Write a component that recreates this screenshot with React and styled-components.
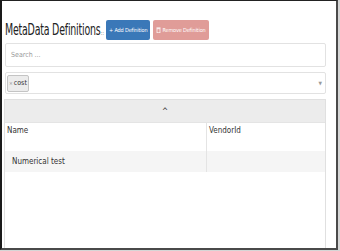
import React from 'react';
import styled, { createGlobalStyle } from 'styled-components';

const GlobalStyle = createGlobalStyle`
  html, body {
    margin: 0;
    padding: 0;
    background: #d6d6d6;
  }
  body {
    font-family: 'DejaVu Sans Condensed', 'Liberation Sans', sans-serif;
  }
`;

const Frame = styled.div`
  box-sizing: border-box;
  width: 338px;
  height: 250px;
  background: white;
  border: 2px solid #4a4a4a;
  border-left-color: #1a1a1a;
  border-top: 1px solid #222;
  overflow: hidden;
  display: flex;
  flex-direction: column;
  padding: 19px 10px 0 0;
`;

const TitleRow = styled.div`
  display: flex;
  align-items: center;
  height: 20px;
  padding-left: 3px;
`;

// the source font is a tall condensed face; squeeze the title to match
const Title = styled.h1`
  margin: 0 -42px 0 0;
  font-weight: normal;
  font-size: 15px;
  letter-spacing: -0.3px;
  color: #222;
  line-height: 20px;
  white-space: nowrap;
  transform: scaleX(0.7);
  transform-origin: left center;
`;

const Handle = styled.span`
  font-size: 6px;
  color: #777;
  margin: 6px 2px 0 1px;
  line-height: 1;
`;

const Button = styled.button`
  height: 20px;
  border: none;
  border-radius: 2px;
  padding: 0 3px;
  margin-right: 3px;
  font-family: inherit;
  font-size: 5.5px;
  letter-spacing: -0.15px;
  color: white;
  background: ${p => (p.danger ? '#e09c98' : '#3a78b8')};
  display: flex;
  align-items: center;
  gap: 1px;
`;

const Input = styled.div`
  box-sizing: border-box;
  margin: 3px 0 0 3px;
  height: 24px;
  border: 1px solid #e2e2e2;
  border-radius: 2px;
  display: flex;
  align-items: center;
  padding-left: 5px;
  font-size: 7px;
  color: #999;
`;

const Select = styled(Input)`
  margin-top: 5px;
  height: 22px;
  padding: 0 3px 0 1px;
  justify-content: space-between;
`;

const Tag = styled.span`
  height: 17px;
  border: 1px solid #c4c4c4;
  border-radius: 2px;
  background: #ececec;
  color: #333;
  font-size: 7px;
  display: flex;
  align-items: center;
  padding: 0 1px;
  box-sizing: border-box;
`;

const Cross = styled.span`
  color: #888;
  font-size: 5px;
  margin-right: 1px;
`;

const Caret = styled.span`
  font-size: 5px;
  color: #999;
`;

const Panel = styled.div`
  flex: 1;
  margin: 5px 0 0 2px;
  border: 1px solid #e0e0e0;
  border-bottom: none;
`;

const PanelHead = styled.div`
  height: 22px;
  background: #ececec;
  display: flex;
  align-items: center;
  justify-content: center;
  font-size: 8px;
  color: #333;
  border-bottom: 1px solid #e4e4e4;
`;

const Row = styled.div`
  display: grid;
  grid-template-columns: 201px 1fr;
  height: ${p => p.h}px;
  background: ${p => (p.striped ? '#f5f5f5' : 'white')};
  font-size: 8px;
  color: #333;
`;

const Cell = styled.div`
  padding: ${p => (p.head ? '3px 2px' : '0 7px')};
  display: flex;
  align-items: ${p => (p.head ? 'flex-start' : 'center')};
  & + & {
    border-left: 1px solid #e4e4e4;
  }
`;

const Trash = () => (
  <svg width="5" height="6" viewBox="0 0 5 6">
    <rect x="0.5" y="0.5" width="4" height="1" fill="white" />
    <rect x="1" y="1.8" width="3" height="4" fill="none" stroke="white" strokeWidth="0.7" />
  </svg>
);

export default function App() {
  return (
    <>
      <GlobalStyle />
      <Frame>
        <TitleRow>
          <Title>MetaData Definitions</Title>
          <Handle>::</Handle>
          <Button>+ Add Definition</Button>
          <Button danger>
            <Trash /> Remove Definition
          </Button>
        </TitleRow>
        <Input>Search ...</Input>
        <Select>
          <Tag>
            <Cross>×</Cross>cost
          </Tag>
          <Caret>▼</Caret>
        </Select>
        <Panel>
          <PanelHead>^</PanelHead>
          <Row h={28}>
            <Cell head>Name</Cell>
            <Cell head>VendorId</Cell>
          </Row>
          <Row h={21} striped>
            <Cell>Numerical test</Cell>
            <Cell />
          </Row>
        </Panel>
      </Frame>
    </>
  );
}
